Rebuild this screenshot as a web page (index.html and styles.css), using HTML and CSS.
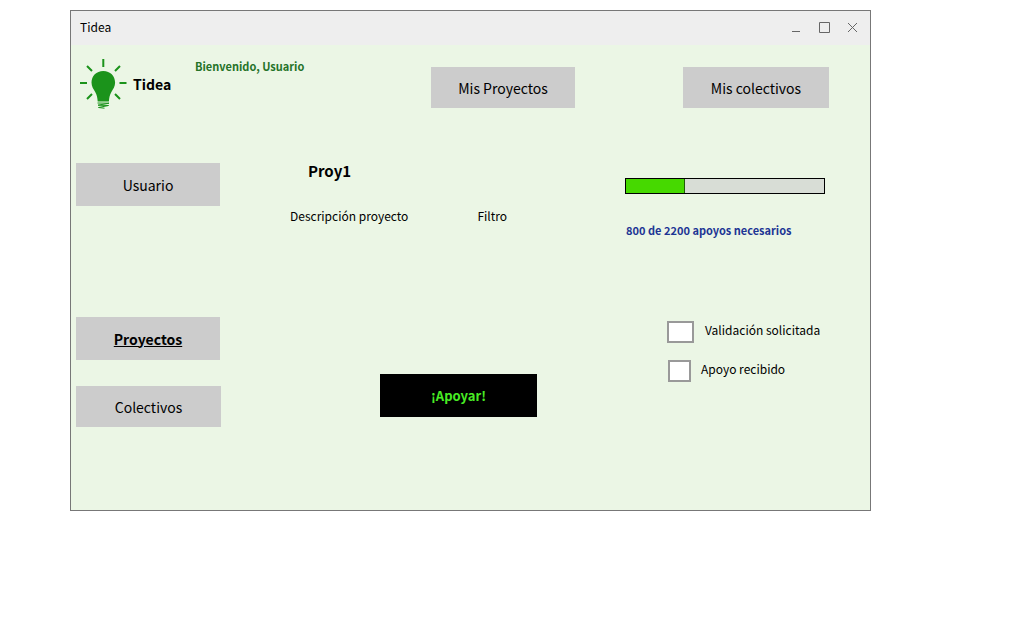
FILE: index.html
```html
<!DOCTYPE html>
<html lang="es">
<head>
<meta charset="utf-8">
<title>Tidea</title>
<link rel="stylesheet" href="styles.css">
</head>
<body>
<div class="window">
  <div class="titlebar">
    <span class="titlebar-name">Tidea</span>
    <div class="controls">
      <button class="control" type="button" aria-label="Minimizar"><svg width="12" height="12" viewBox="0 0 12 12"><path d="M2 10.5h8"/></svg></button>
      <button class="control" type="button" aria-label="Maximizar"><svg width="12" height="12" viewBox="0 0 12 12"><path d="M1.500 1.500h10v10h-10z"/></svg></button>
      <button class="control" type="button" aria-label="Cerrar"><svg width="12" height="12" viewBox="0 0 12 12"><path d="M2 2l9 9M11 2l-9 9"/></svg></button>
    </div>
  </div>
  <header class="header">
    <div class="brand">
      <svg class="logo" width="48" height="54" viewBox="0 0 48 54" aria-hidden="true">
        <path class="logo-rays" d="M24.300 2v8M8 9l5 5M41 9l-5 5M1 26h7M40.500 26h7M8 42l5-5M41 42l-5-5"/>
        <path class="logo-bulb" d="M24.300 14c-7 0-11.800 5-11.800 11.500 0 4 2 6.500 3.700 9.500 1.700 3 2.300 6 2.500 9.500h11.200c.2-3.500.8-6.500 2.500-9.500 1.700-3 3.700-5.500 3.700-9.500C36.100 19 31.300 14 24.300 14z"/>
        <path class="logo-base" d="M18.500 46l11.500.2-11 2 10.500.3-10 2 6 .7"/>
      </svg>
      <h1 class="brand-name">Tidea</h1>
    </div>
    <p class="welcome">Bienvenido, Usuario</p>
    <nav class="quick">
      <button class="btn" type="button">Mis Proyectos</button>
      <button class="btn btn-wide" type="button">Mis colectivos</button>
    </nav>
  </header>
  <main class="layout">
    <nav class="side">
      <button class="btn btn-tall btn-user" type="button">Usuario</button>
      <button class="btn btn-tall btn-current" type="button" aria-current="page">Proyectos</button>
      <button class="btn btn-wide" type="button">Colectivos</button>
    </nav>
    <section class="project">
      <h2 class="project-name">Proy1</h2>
      <div class="details">
        <p>Descripción proyecto</p>
        <p>Filtro</p>
      </div>
      <button class="support" type="button">¡Apoyar!</button>
    </section>
    <section class="status">
      <div class="bar" role="progressbar" aria-valuemin="0" aria-valuemax="2200" aria-valuenow="800" aria-labelledby="count"><div class="bar-fill"></div></div>
      <p class="count" id="count">800 de 2200 apoyos necesarios</p>
      <div class="checks">
        <label class="check"><input class="box box-wide" type="checkbox">Validación solicitada</label>
        <label class="check check-second"><input class="box" type="checkbox">Apoyo recibido</label>
      </div>
    </section>
  </main>
</div>
</body>
</html>
```
FILE: styles.css
```css
* { box-sizing: border-box; }

body {
  margin: 0;
  padding: 10px 153px 10px 70px;
  background: #fff;
  color: #000;
  font: 12px/18px "Noto Sans CJK SC", "Noto Sans", sans-serif;
}

h1, h2, p { margin: 0; }

button { border: 0; padding: 0; font: inherit; color: inherit; }

.window { border: 1px solid #777; background: #ebf6e5; }

.titlebar {
  display: flex;
  align-items: center;
  justify-content: space-between;
  height: 34px;
  padding: 0 10px 2px 9px;
  background: #eee;
}

.controls { display: flex; gap: 12px; }
.control { display: flex; align-items: center; justify-content: center; width: 16px; height: 20px; background: none; }
.control path { fill: none; stroke: #666; stroke-width: 1; }

.header { display: flex; align-items: flex-start; padding: 12px 41px 0 8px; }

.brand { display: flex; align-items: center; gap: 6px; width: 116px; }
.logo-rays { fill: none; stroke: #1b931b; stroke-width: 2; }
.logo-bulb { fill: #1b931b; }
.logo-base { fill: none; stroke: #1b931b; stroke-width: 1; }
.brand-name { font-size: 14px; line-height: 24px; }

.welcome { font-size: 11px; font-weight: 700; color: #257329; }

.quick { display: flex; gap: 108px; margin: 10px 0 0 auto; }

.btn { width: 144px; height: 41px; background: #ccc; font-size: 14px; line-height: 24px; }
.btn-wide { width: 145px; }
.quick .btn-wide { width: 146px; }
.btn-tall { height: 43px; }

.layout {
  display: grid;
  grid-template-columns: 145px 1fr 245px;
  padding: 52px 0 83px 5px;
}

.side { display: flex; flex-direction: column; align-items: flex-start; }
.btn-user { margin-bottom: 111px; }
.btn-current { margin-bottom: 26px; font-weight: 700; text-decoration: underline; }

.project { padding-left: 69px; }
.project-name { padding-left: 18px; font-size: 15px; line-height: 16px; }
.details { display: flex; gap: 69px; margin-top: 28px; }
.support {
  display: block;
  width: 157px;
  height: 43px;
  margin: 149px 0 0 90px;
  background: #000;
  color: #48ec24;
  font-size: 13px;
  font-weight: 700;
}

.status { padding-top: 15px; }
.bar { width: 200px; height: 16px; border: 1px solid #000; background: #d8ddd6; }
.bar-fill { width: 30%; height: 100%; border-right: 1px solid #205c08; background: #46d900; }
.count { margin: 27px 0 0 1px; font-size: 11px; font-weight: 700; color: #1d3594; }

.checks { display: flex; flex-direction: column; gap: 17px; margin: 82px 0 0 42px; }
.check { display: flex; align-items: flex-start; gap: 11px; }
.check-second { gap: 10px; padding-left: 1px; }
.box { appearance: none; width: 23px; height: 22px; margin: 0; border: 2px solid #999; background: #fff; }
.box-wide { width: 27px; }
.box:checked { background: #46d900; }
```
